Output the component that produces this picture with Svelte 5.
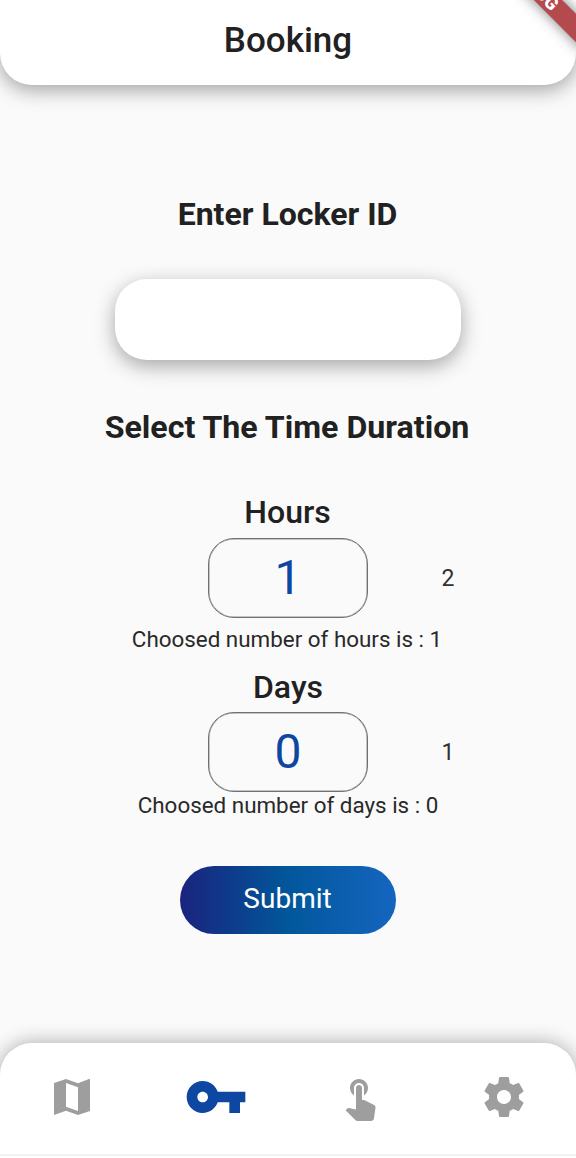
<script>
  const pickers = [
    { title: 'Hours', value: 1, next: 2, note: 'Choosed number of hours is : 1', kind: 'hours' },
    { title: 'Days', value: 0, next: 1, note: 'Choosed number of days is : 0', kind: 'days' }
  ];
  const tabs = [
    { name: 'map', size: 48, d: 'M20.500 3L15 5.100 9 3 3 5v16l6-2.100 6 2.100 6-2V3h-.5zM15 19l-6-2.110V5l6 2.110V19z' },
    { name: 'key', size: 64, d: 'M12.650 10C11.830 7.670 9.610 6 7 6c-3.310 0-6 2.690-6 6s2.690 6 6 6c2.610 0 4.830-1.670 5.650-4H17v4h4v-4h2v-4H12.650zM7 14c-1.100 0-2-.9-2-2s.9-2 2-2 2 .9 2 2-.9 2-2 2z' },
    { name: 'touch', size: 48, d: 'M9 11.240V7.500C9 6.120 10.120 5 11.500 5S14 6.120 14 7.500v3.740c1.210-.81 2-2.180 2-3.740C16 5.010 13.990 3 11.500 3S7 5.010 7 7.500c0 1.560.79 2.930 2 3.740zm9.840 4.630l-4.540-2.260c-.17-.07-.35-.11-.54-.11H13v-6c0-.83-.67-1.500-1.500-1.500S10 6.670 10 7.500v10.740l-3.430-.72c-.08-.01-.15-.03-.24-.03-.31 0-.59.13-.79.33l-.79.8 4.940 4.940c.27.27.65.44 1.060.44h6.790c.75 0 1.330-.55 1.440-1.280l.75-5.270c.01-.07.02-.14.02-.2 0-.62-.38-1.160-.91-1.380z' },
    { name: 'settings', size: 48, d: 'M19.430 12.980c.04-.32.07-.64.07-.98s-.03-.66-.07-.98l2.110-1.650c.19-.15.24-.42.12-.64l-2-3.460c-.12-.22-.39-.3-.61-.22l-2.490 1c-.52-.4-1.080-.73-1.690-.98l-.38-2.650C14.460 2.180 14.250 2 14 2h-4c-.25 0-.46.18-.49.42l-.38 2.650c-.61.25-1.170.59-1.690.98l-2.490-1c-.23-.09-.49 0-.61.22l-2 3.460c-.13.22-.07.49.12.64l2.110 1.650c-.04.32-.07.65-.07.98s.03.66.07.98l-2.110 1.650c-.19.15-.24.42-.12.64l2 3.460c.12.22.39.3.61.22l2.490-1c.52.4 1.080.73 1.690.98l.38 2.650c.03.24.24.42.49.42h4c.25 0 .46-.18.49-.42l.38-2.650c.61-.25 1.170-.59 1.690-.98l2.490 1c.23.09.49 0 .61-.22l2-3.460c.12-.22.07-.49-.12-.64l-2.110-1.650zM12 15.500c-1.930 0-3.500-1.570-3.500-3.500s1.570-3.500 3.500-3.500 3.500 1.570 3.500 3.500-1.570 3.500-3.500 3.500z' }
  ];
</script>

<div class="screen">
  <header>Booking</header>
  <div class="debug" aria-hidden="true"><span>DEBUG</span></div>

  <main>
    <h2 class="locker">Enter Locker ID</h2>
    <input aria-label="Enter Locker ID" />
    <h2 class="duration">Select The Time Duration</h2>
    {#each pickers as p}
      <section class={p.kind}>
        <h3>{p.title}</h3>
        <div class="wheel">
          <span></span>
          <div class="box">{p.value}</div>
          <span class="next">{p.next}</span>
        </div>
        <p>{p.note}</p>
      </section>
    {/each}
    <button class="submit">Submit</button>
  </main>

  <nav>
    {#each tabs as t}
      <button class="tab" class:active={t.name === 'key'} aria-label={t.name}>
        <svg viewBox="0 0 24 24" width={t.size} height={t.size}><path d={t.d} /></svg>
      </button>
    {/each}
  </nav>
  <footer></footer>
</div>

<style>
  :global(body) { margin: 0; }
  .screen {
    position: relative;
    width: 576px;
    height: 1158px;
    overflow: hidden;
    display: flex;
    flex-direction: column;
    background: #fafafa;
    color: #212121;
    font-family: Roboto, sans-serif;
  }
  header {
    height: 85px;
    box-sizing: border-box;
    padding-top: 19px;
    text-align: center;
    font-size: 35px;
    line-height: 44px;
    font-weight: 500;
    background: #fff;
    border-radius: 0 0 32px 32px;
    box-shadow: 0 5px 20px rgba(0, 0, 0, 0.36);
  }
  .debug {
    position: absolute;
    top: 0;
    right: 0;
    width: 100px;
    height: 80px;
    overflow: hidden;
  }
  .debug span {
    position: absolute;
    left: -21px;
    top: -23px;
    width: 160px;
    height: 20px;
    line-height: 20px;
    text-align: center;
    background: #b24a4e;
    color: #fff;
    font-size: 18px;
    font-weight: 900;
    transform: rotate(45deg);
    box-shadow: 0 0 14px rgba(0, 0, 0, 0.5);
  }
  main {
    flex: 1;
    display: flex;
    flex-direction: column;
    align-items: center;
  }
  h2, h3, p { margin: 0; }
  h2 { font-size: 32px; line-height: 38px; font-weight: 700; white-space: nowrap; padding-right: 1px; }
  .locker { margin-top: 110px; }
  input {
    width: 346px;
    height: 81px;
    box-sizing: border-box;
    margin-top: 46px;
    border: 0;
    border-radius: 32px;
    background: #fff;
    box-shadow: 0 6px 20px rgba(0, 0, 12, 0.34);
    outline: 0;
  }
  .duration { margin-top: 48px; font-size: 32.150px; padding-right: 2px; }
  section { width: 480px; text-align: center; }
  .hours { margin-top: 46px; height: 175px; }
  .days { height: 175px; }
  h3 { font-size: 32px; line-height: 40px; font-weight: 500; height: 46px; padding-right: 1px; }
  .days h3 { height: 45px; padding-right: 0; }
  .wheel { display: grid; grid-template-columns: 160px 160px 160px; align-items: center; }
  .box {
    height: 80px;
    box-sizing: border-box;
    border: 1px solid #707070;
    box-shadow: inset 0 0 0 0.500px #909090;
    border-radius: 26px;
    color: #0d47a1;
    font-size: 48px;
    line-height: 78px;
  }
  .next { font-size: 23px; color: #303030; }
  p { font-size: 22.400px; line-height: 27px; margin-top: 8px; white-space: nowrap; padding-right: 2px; color: #292929; }
  .days p { margin-top: 0; padding-right: 0; }
  .submit {
    width: 216px;
    height: 68px;
    padding: 0 1px 3px 0;
    border: 0;
    border-radius: 34px;
    color: #fff;
    font: 400 28px Roboto, sans-serif;
    background: linear-gradient(90deg, #1a237e, #01579b 50%, #1565c0);
    margin-top: 24px;
  }
  nav {
    height: 111px;
    box-sizing: border-box;
    padding-bottom: 3px;
    display: grid;
    grid-template-columns: repeat(4, 1fr);
    background: #fff;
    border-radius: 32px 32px 0 0;
    box-shadow: 0 0 20px rgba(0, 0, 0, 0.33);
  }
  footer {
    position: relative;
    height: 4px;
    box-sizing: border-box;
    border-top: 2px solid #f1f1f1;
    background: #fff;
  }
  .tab {
    display: flex;
    align-items: center;
    justify-content: center;
    padding: 0;
    border: 0;
    background: none;
    color: #9e9e9e;
  }
  .active { color: #0d47a1; }
  svg { fill: currentColor; display: block; }
</style>
